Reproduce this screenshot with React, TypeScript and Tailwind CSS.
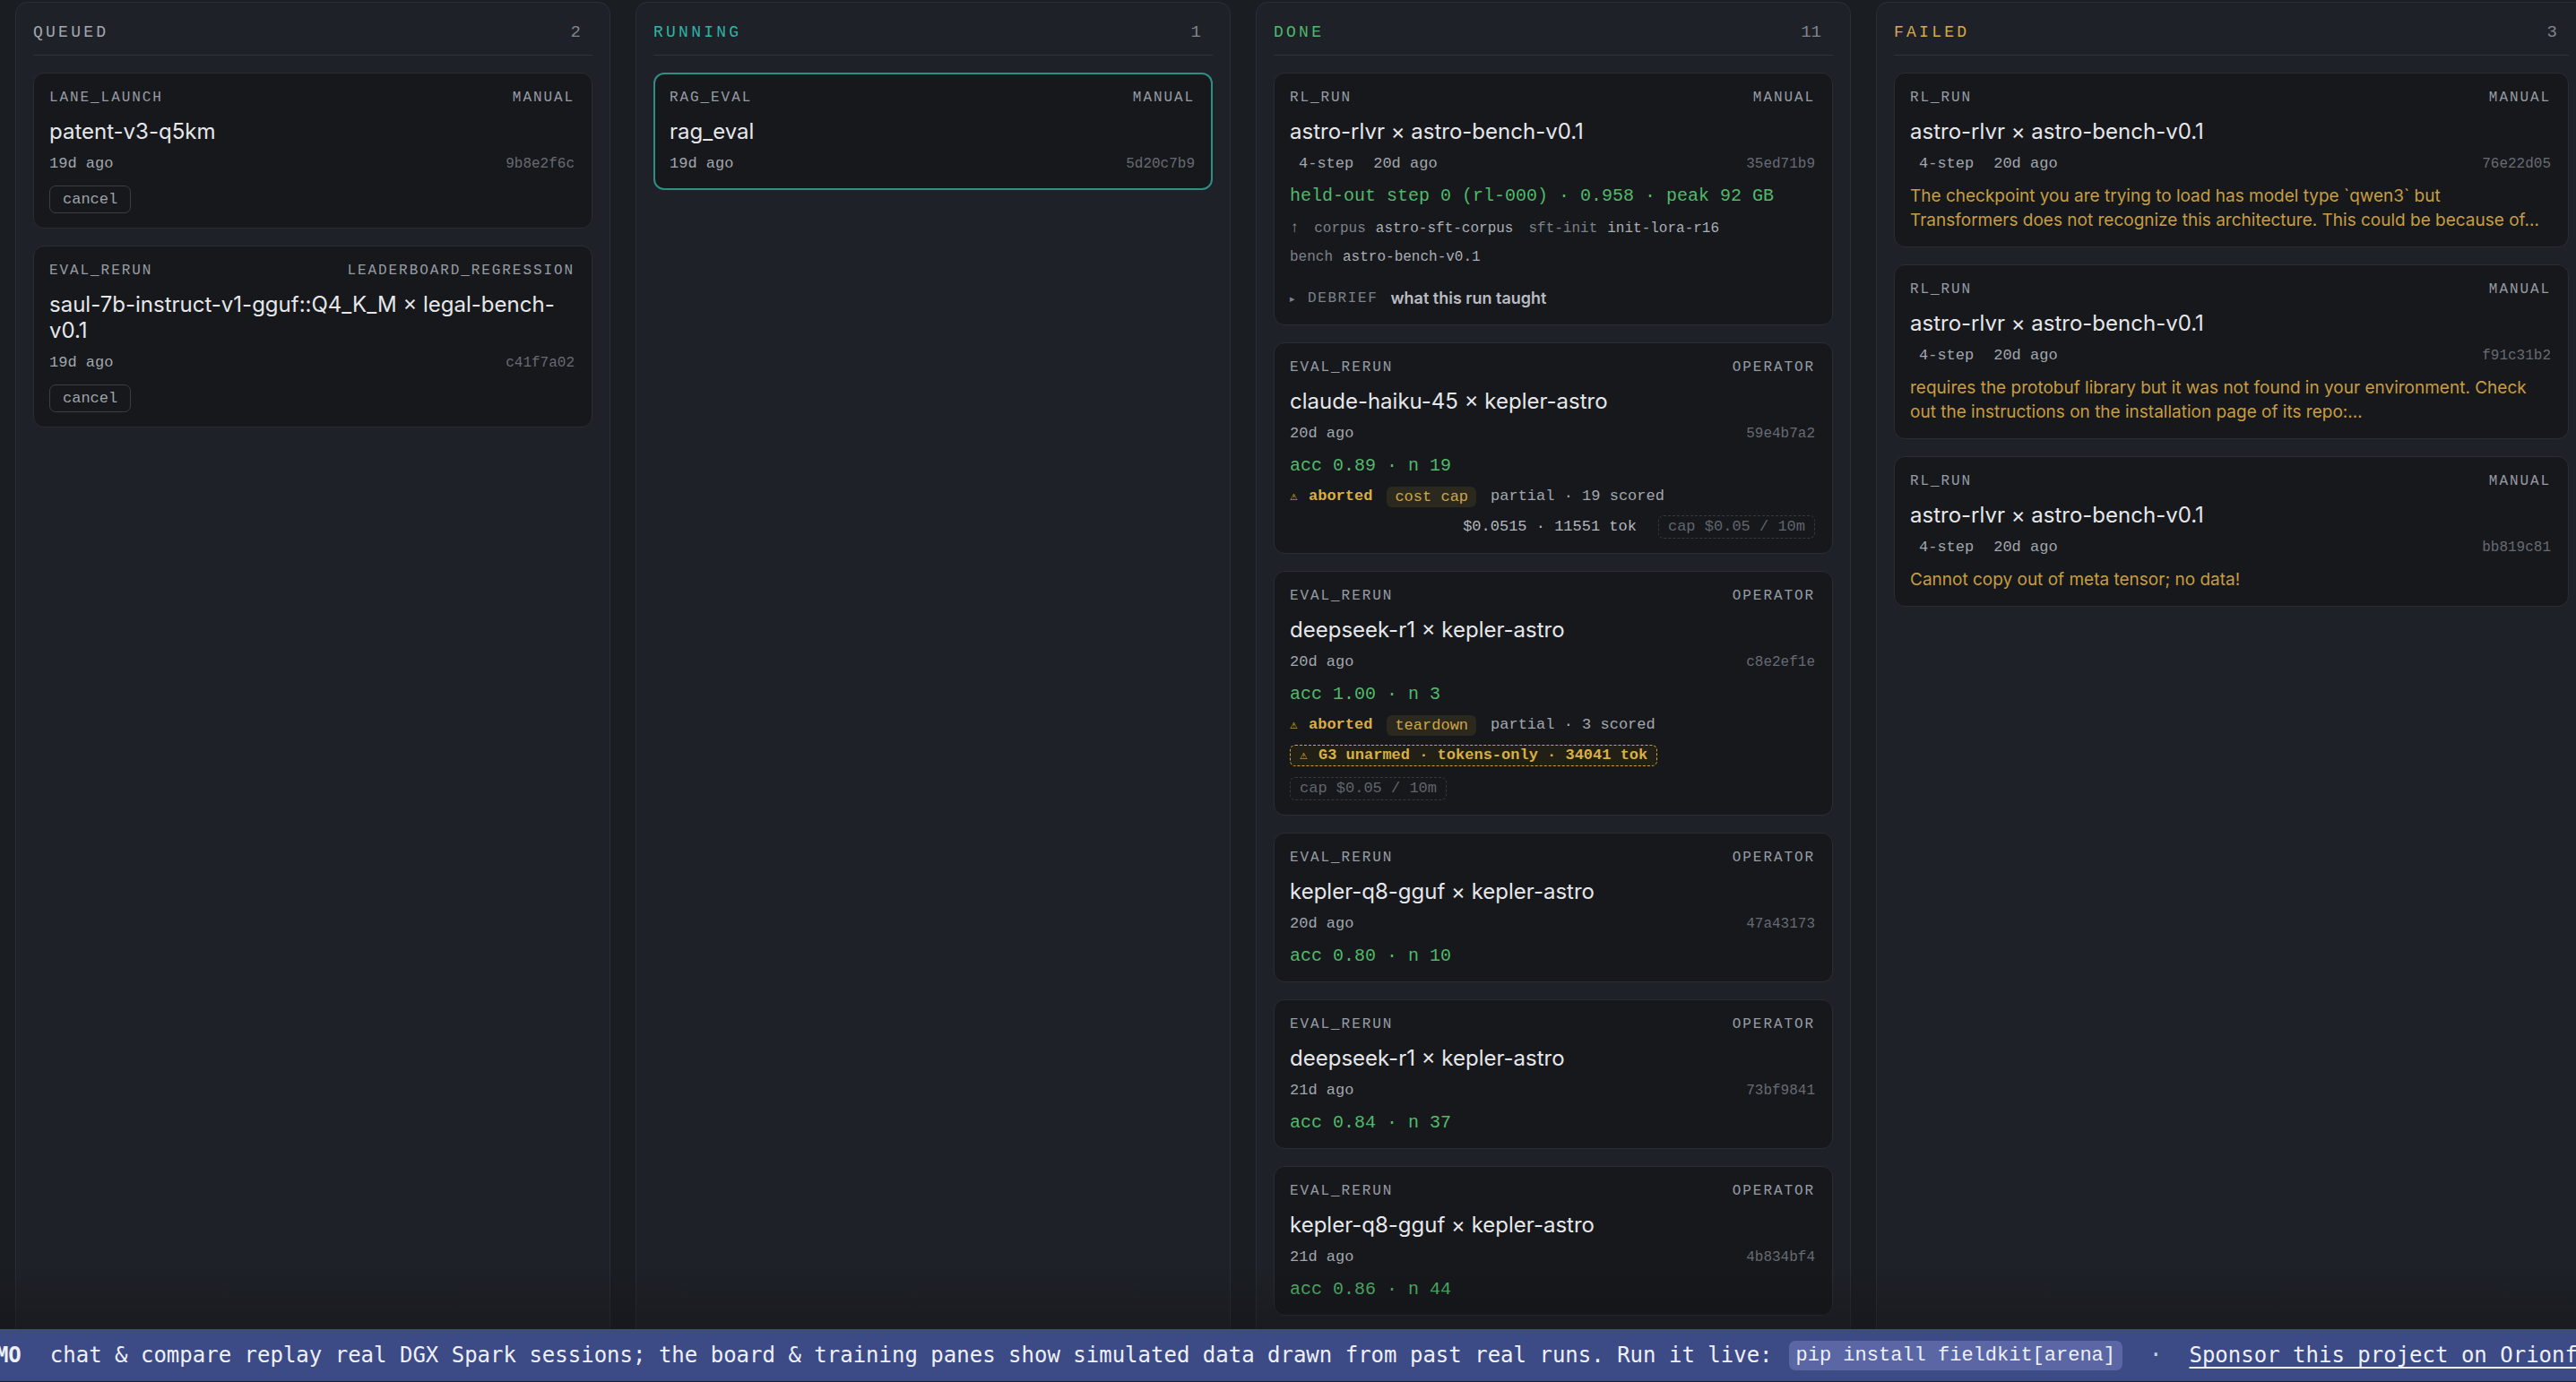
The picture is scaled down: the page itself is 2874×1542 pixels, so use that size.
import type { ReactNode } from "react";

const MONO = "font-['Liberation_Mono','DejaVu_Sans_Mono',monospace]";
const SANS = "font-['Inter','Noto_Sans',sans-serif]";

interface CardProps {
  kind: string;
  source: string;
  title: string;
  ago: string;
  hash: string;
  step?: string;
  active?: boolean;
  children?: ReactNode;
}

function Card({ kind, source, title, ago, hash, step, active, children }: CardProps) {
  return (
    <div
      className={
        active
          ? "rounded-[12px] border-2 border-[#2f8e83] bg-[#16181c] pl-[16px] pr-[18px] pt-[16px] pb-[15px]"
          : "rounded-[12px] border border-[#2a2d34] bg-[#16181c] pl-[17px] pr-[19px] pt-[17px] pb-[16px]"
      }
    >
      <div
        className={`${MONO} flex items-center justify-between text-[16px] leading-[20px] tracking-[0.12em] text-[#979ca4]`}
      >
        <span>{kind}</span>
        <span>{source}</span>
      </div>
      <div className={`${SANS} mt-[13px] text-[24px] leading-[29px] text-[#e6e7ea]`}>{title}</div>
      <div className={`${MONO} mt-[10px] flex items-center justify-between leading-[24px]`}>
        <div className="flex items-center gap-[12px] text-[17px] text-[#a2a6ad]">
          {step && <span className="px-[10px]">{step}</span>}
          <span>{ago}</span>
        </div>
        <span className="text-[16px] text-[#676b73]">{hash}</span>
      </div>
      {children}
    </div>
  );
}

function CancelButton() {
  return (
    <button
      className={`${MONO} mt-[12px] flex h-[31px] items-center rounded-[7px] border border-[#3a3e46] px-[14px] text-[17px] text-[#9ea2aa]`}
    >
      cancel
    </button>
  );
}

function Score({ children }: { children: ReactNode }) {
  return (
    <div className={`${MONO} mt-[12px] text-[20px] leading-[24px] text-[#52b96a]`}>{children}</div>
  );
}

function Aborted({ reason, scored }: { reason: string; scored: number }) {
  return (
    <div className={`${MONO} mt-[10px] flex items-center gap-[16px] text-[17px] leading-[24px]`}>
      <span className="flex items-center font-bold text-[#d8ae45]">
        <span className="inline-block w-[21px] text-[14px] font-normal">⚠</span>
        aborted
      </span>
      <span className="rounded-[6px] bg-[#2b281e] px-[9px] leading-[23px] text-[#cda647]">{reason}</span>
      <span className="text-[#a3a7ae]">partial · {scored} scored</span>
    </div>
  );
}

function CapBox() {
  return (
    <span className="rounded-[6px] border border-dashed border-[#343840] px-[10px] leading-[24px] text-[#60656d]">
      cap $0.05 / 10m
    </span>
  );
}

function ErrorText({ children }: { children: ReactNode }) {
  return (
    <p className={`${SANS} mt-[10px] text-[19px] leading-[27px] text-[#c69d42]`}>{children}</p>
  );
}

interface ColumnProps {
  name: string;
  count: number;
  tone: string;
  wide?: boolean;
  children: ReactNode;
}

function Column({ name, count, tone, wide, children }: ColumnProps) {
  return (
    <section
      className={`${wide ? "w-[793px]" : "w-[664px]"} flex flex-shrink-0 flex-col rounded-t-[14px] border border-b-0 border-[#2a2e35] bg-[#1e2127] px-[19px]`}
    >
      <header
        className={`${MONO} flex items-center justify-between border-b border-[#2f333a] pt-[21px] pb-[13px] leading-[24px]`}
      >
        <span className={`text-[18px] tracking-[0.18em] ${tone}`}>{name}</span>
        <span className="pr-[13px] text-[19px] text-[#80858d]">{count}</span>
      </header>
      <div className="flex flex-col gap-[19px] pt-[19px]">{children}</div>
    </section>
  );
}

function Banner() {
  return (
    <div className="flex h-[59px] flex-shrink-0 items-center overflow-hidden whitespace-nowrap border-b border-[#171b2c] bg-[#3c4a86] font-['DejaVu_Sans_Mono',monospace] text-[24px] text-[#eef0f8]">
      <div className="-ml-[34px] flex items-center">
        <span className="font-bold">DEMO</span>
        <span className="ml-[32px]">
          chat &amp; compare replay real DGX Spark sessions; the board &amp; training panes show simulated data
          drawn from past real runs. Run it live:
        </span>
        <code className="ml-[18px] rounded-[7px] bg-[#5a67a4] px-[8px] text-[22px] leading-[33px]">
          pip install fieldkit[arena]
        </code>
        <span className="ml-[30px] text-[#c9cde6]">·</span>
        <a className="ml-[30px] underline decoration-[2px] underline-offset-[5px]" href="#">
          Sponsor this project on Orionfield
        </a>
      </div>
    </div>
  );
}

export default function App() {
  return (
    <div className="flex h-screen w-full flex-col overflow-hidden bg-[#1a1d22]">
      <div className="relative flex min-h-0 flex-1 gap-[28px] overflow-hidden pl-[17px] pt-[2px]">
        <Column name="QUEUED" count={2} tone="text-[#a3a7ae]">
          <Card kind="LANE_LAUNCH" source="MANUAL" title="patent-v3-q5km" ago="19d ago" hash="9b8e2f6c">
            <CancelButton />
          </Card>
          <Card
            kind="EVAL_RERUN"
            source="LEADERBOARD_REGRESSION"
            title="saul-7b-instruct-v1-gguf::Q4_K_M × legal-bench-v0.1"
            ago="19d ago"
            hash="c41f7a02"
          >
            <CancelButton />
          </Card>
        </Column>

        <Column name="RUNNING" count={1} tone="text-[#2fb3a4]">
          <Card kind="RAG_EVAL" source="MANUAL" title="rag_eval" ago="19d ago" hash="5d20c7b9" active />
        </Column>

        <Column name="DONE" count={11} tone="text-[#4fb86a]">
          <Card
            kind="RL_RUN"
            source="MANUAL"
            title="astro-rlvr × astro-bench-v0.1"
            step="4-step"
            ago="20d ago"
            hash="35ed71b9"
          >
            <Score>held-out step 0 (rl-000) · 0.958 · peak 92 GB</Score>
            <div className={`${MONO} mt-[13px] flex items-center gap-[17px] text-[16px] leading-[22px]`}>
              <span className="text-[17px] text-[#8a8f97]">↑</span>
              <span className="flex gap-[11px]">
                <span className="text-[#7c8189]">corpus</span>
                <span className="text-[#aaaeb5]">astro-sft-corpus</span>
              </span>
              <span className="flex gap-[11px]">
                <span className="text-[#7c8189]">sft-init</span>
                <span className="text-[#aaaeb5]">init-lora-r16</span>
              </span>
            </div>
            <div className={`${MONO} mt-[10px] flex gap-[11px] text-[16px] leading-[22px]`}>
              <span className="text-[#7c8189]">bench</span>
              <span className="text-[#aaaeb5]">astro-bench-v0.1</span>
            </div>
            <div className="mt-[22px] flex items-center gap-[14px] leading-[26px]">
              <span className="text-[11px] text-[#7d828a]">▸</span>
              <span className={`${MONO} text-[16px] tracking-[0.1em] text-[#7d828a]`}>DEBRIEF</span>
              <span className={`${SANS} text-[18px] font-semibold text-[#b9bcc2]`}>what this run taught</span>
            </div>
          </Card>

          <Card
            kind="EVAL_RERUN"
            source="OPERATOR"
            title="claude-haiku-45 × kepler-astro"
            ago="20d ago"
            hash="59e4b7a2"
          >
            <Score>acc 0.89 · n 19</Score>
            <Aborted reason="cost cap" scored={19} />
            <div className={`${MONO} mt-[9px] flex items-center justify-end gap-[24px] text-[17px]`}>
              <span className="text-[#b3b7be]">$0.0515 · 11551 tok</span>
              <CapBox />
            </div>
          </Card>

          <Card kind="EVAL_RERUN" source="OPERATOR" title="deepseek-r1 × kepler-astro" ago="20d ago" hash="c8e2ef1e">
            <Score>acc 1.00 · n 3</Score>
            <Aborted reason="teardown" scored={3} />
            <div
              className={`${MONO} mt-[10px] flex w-fit items-center rounded-[6px] border-[1.5px] border-dashed border-[#c9a33c] bg-[#221f16] px-[10px] text-[17px] font-bold leading-[22px] text-[#d9b042]`}
            >
              <span className="inline-block w-[21px] text-[14px] font-normal">⚠</span>
              G3 unarmed · tokens-only · 34041 tok
            </div>
            <div className={`${MONO} mt-[12px] flex text-[17px]`}>
              <CapBox />
            </div>
          </Card>

          <Card
            kind="EVAL_RERUN"
            source="OPERATOR"
            title="kepler-q8-gguf × kepler-astro"
            ago="20d ago"
            hash="47a43173"
          >
            <Score>acc 0.80 · n 10</Score>
          </Card>

          <Card kind="EVAL_RERUN" source="OPERATOR" title="deepseek-r1 × kepler-astro" ago="21d ago" hash="73bf9841">
            <Score>acc 0.84 · n 37</Score>
          </Card>

          <Card
            kind="EVAL_RERUN"
            source="OPERATOR"
            title="kepler-q8-gguf × kepler-astro"
            ago="21d ago"
            hash="4b834bf4"
          >
            <Score>acc 0.86 · n 44</Score>
          </Card>
        </Column>

        <Column name="FAILED" count={3} tone="text-[#d6aa45]" wide>
          <Card
            kind="RL_RUN"
            source="MANUAL"
            title="astro-rlvr × astro-bench-v0.1"
            step="4-step"
            ago="20d ago"
            hash="76e22d05"
          >
            <ErrorText>
              The checkpoint you are trying to load has model type `qwen3` but Transformers does not recognize this
              architecture. This could be because of…
            </ErrorText>
          </Card>
          <Card
            kind="RL_RUN"
            source="MANUAL"
            title="astro-rlvr × astro-bench-v0.1"
            step="4-step"
            ago="20d ago"
            hash="f91c31b2"
          >
            <ErrorText>
              requires the protobuf library but it was not found in your environment. Check out the instructions on
              the installation page of its repo:…
            </ErrorText>
          </Card>
          <Card
            kind="RL_RUN"
            source="MANUAL"
            title="astro-rlvr × astro-bench-v0.1"
            step="4-step"
            ago="20d ago"
            hash="bb819c81"
          >
            <ErrorText>Cannot copy out of meta tensor; no data!</ErrorText>
          </Card>
        </Column>

        {/* soft fade where the board runs under the banner */}
        <div className="pointer-events-none absolute inset-x-0 bottom-0 h-[70px] bg-gradient-to-b from-transparent to-[#0f1114]/40" />
      </div>
      <Banner />
    </div>
  );
}
